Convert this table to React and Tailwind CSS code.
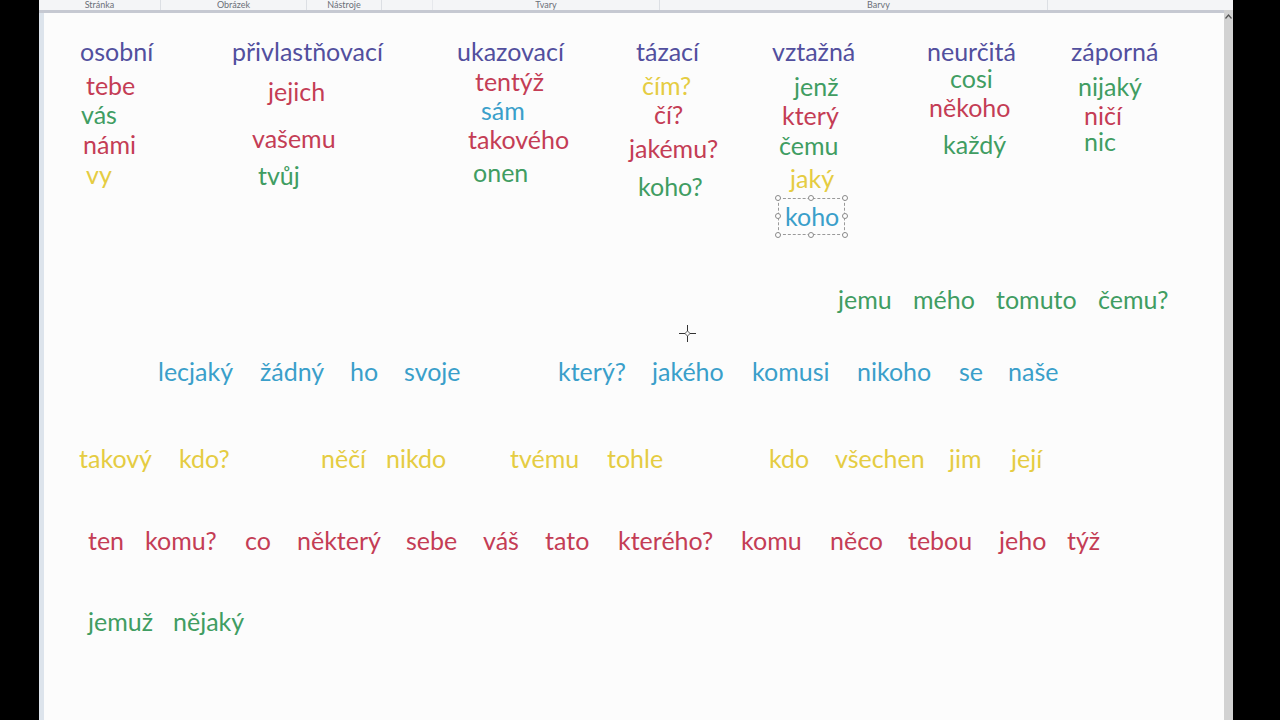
import React from 'react';

// canvas origin in page coordinates
const OX = 44;
const OY = 13;

const C = {
  head: 'text-[#524f9e]',
  red: 'text-[#c43d55]',
  green: 'text-[#409d62]',
  blue: 'text-[#3a9fca]',
  yellow: 'text-[#e5cc42]',
};

// [text, left x, center y, colour]
const words = [
  ['osobní', 80, 55, 'head'],
  ['přivlastňovací', 232, 55, 'head'],
  ['ukazovací', 457, 55, 'head'],
  ['tázací', 636, 55, 'head'],
  ['vztažná', 772, 55, 'head'],
  ['neurčitá', 927, 55, 'head'],
  ['záporná', 1071, 55, 'head'],

  ['tebe', 86, 89, 'red'],
  ['vás', 81, 118, 'green'],
  ['námi', 83, 148, 'red'],
  ['vy', 86, 178, 'yellow'],

  ['jejich', 268, 95, 'red'],
  ['vašemu', 252, 142, 'red'],
  ['tvůj', 258, 179, 'green'],

  ['tentýž', 475, 85, 'red'],
  ['sám', 481, 114, 'blue'],
  ['takového', 468, 143, 'red'],
  ['onen', 473, 176, 'green'],

  ['čím?', 642, 89, 'yellow'],
  ['čí?', 654, 118, 'red'],
  ['jakému?', 629, 152, 'red'],
  ['koho?', 638, 190, 'green'],

  ['jenž', 794, 90, 'green'],
  ['který', 782, 119, 'red'],
  ['čemu', 779, 149, 'green'],
  ['jaký', 790, 182, 'yellow'],

  ['cosi', 950, 82, 'green'],
  ['někoho', 929, 111, 'red'],
  ['každý', 943, 148, 'green'],

  ['nijaký', 1078, 90, 'green'],
  ['ničí', 1084, 119, 'red'],
  ['nic', 1084, 145, 'green'],

  ['jemu', 838, 303, 'green'],
  ['mého', 913, 303, 'green'],
  ['tomuto', 996, 303, 'green'],
  ['čemu?', 1098, 303, 'green'],

  ['lecjaký', 158, 375, 'blue'],
  ['žádný', 260, 375, 'blue'],
  ['ho', 350, 375, 'blue'],
  ['svoje', 404, 375, 'blue'],
  ['který?', 558, 375, 'blue'],
  ['jakého', 652, 375, 'blue'],
  ['komusi', 752, 375, 'blue'],
  ['nikoho', 857, 375, 'blue'],
  ['se', 959, 375, 'blue'],
  ['naše', 1008, 375, 'blue'],

  ['takový', 79, 462, 'yellow'],
  ['kdo?', 179, 462, 'yellow'],
  ['něčí', 321, 462, 'yellow'],
  ['nikdo', 386, 462, 'yellow'],
  ['tvému', 510, 462, 'yellow'],
  ['tohle', 607, 462, 'yellow'],
  ['kdo', 769, 462, 'yellow'],
  ['všechen', 835, 462, 'yellow'],
  ['jim', 949, 462, 'yellow'],
  ['její', 1011, 462, 'yellow'],

  ['ten', 88, 544, 'red'],
  ['komu?', 145, 544, 'red'],
  ['co', 245, 544, 'red'],
  ['některý', 297, 544, 'red'],
  ['sebe', 406, 544, 'red'],
  ['váš', 483, 544, 'red'],
  ['tato', 545, 544, 'red'],
  ['kterého?', 618, 544, 'red'],
  ['komu', 741, 544, 'red'],
  ['něco', 830, 544, 'red'],
  ['tebou', 908, 544, 'red'],
  ['jeho', 999, 544, 'red'],
  ['týž', 1067, 544, 'red'],

  ['jemuž', 88, 625, 'green'],
  ['nějaký', 173, 625, 'green'],
];

function Handle({ className }) {
  return <span className={`absolute w-[6px] h-[6px] rounded-full border border-[#8a8a8a] bg-white ${className}`} />;
}

function Selection() {
  // dashed text box around "koho"
  return (
    <div
      className="absolute border border-dashed border-[#9a9a9a]"
      style={{ left: 778 - OX, top: 198 - OY, width: 67, height: 37 }}
    >
      <Handle className="-left-[4px] -top-[4px]" />
      <Handle className="left-[29px] -top-[4px]" />
      <Handle className="-right-[4px] -top-[4px]" />
      <Handle className="-left-[4px] top-[14px]" />
      <Handle className="-right-[4px] top-[14px]" />
      <Handle className="-left-[4px] -bottom-[4px]" />
      <Handle className="left-[29px] -bottom-[4px]" />
      <Handle className="-right-[4px] -bottom-[4px]" />
      <span className={`absolute left-[6px] top-[7px] text-[25px] leading-5 ${C.blue}`}>koho</span>
    </div>
  );
}

function Crosshair() {
  return (
    <svg
      className="absolute"
      style={{ left: 679 - OX, top: 325 - OY }}
      width="17"
      height="17"
      viewBox="0 0 17 17"
    >
      <path d="M8.5 0v6M8.5 11v6M0 8.5h6M11 8.5h6" stroke="#333" strokeWidth="1" />
      <circle cx="8.5" cy="8.5" r="2" fill="none" stroke="#777" strokeWidth="1" />
    </svg>
  );
}

export default function App() {
  return (
    <div
      className="w-[1280px] h-[720px] bg-black flex overflow-hidden"
      style={{ fontFamily: 'Lato, "Open Sans", sans-serif' }}
    >
      <div className="w-[39px] shrink-0" />

      <div className="w-[1194px] shrink-0 flex flex-col">
        {/* ribbon group labels, mostly scrolled out of view */}
        <div className="h-[10px] shrink-0 bg-[#f4f5f7] flex text-[9px] leading-[10px] text-[#6b6f78]">
          <div className="w-[122px] text-center border-r border-[#dcdfe4]">Stránka</div>
          <div className="w-[146px] text-center border-r border-[#dcdfe4]">Obrázek</div>
          <div className="w-[75px] text-center border-r border-[#dcdfe4]">Nástroje</div>
          <div className="w-[51px] border-r border-[#e6e8ec]" />
          <div className="w-[227px] text-center border-r border-[#dcdfe4]">Tvary</div>
          <div className="w-[388px] text-center pl-[50px] border-r border-[#dcdfe4]">Barvy</div>
          <div className="flex-1" />
        </div>

        <div className="flex-1 flex">
          <div className="w-[5px] shrink-0 bg-[#dde4ec] border-t-[3px] border-[#c6c9d2]" />
          <div className="relative flex-1 bg-[#fcfcfc] border-t-[3px] border-[#c6c9d2]">
            {words.map(([t, x, y, c], i) => (
              <span
                key={i}
                className={`absolute whitespace-nowrap text-[25px] leading-5 ${C[c]}`}
                style={{ left: x - OX, top: y - OY - 3 - 11 }}
              >
                {t}
              </span>
            ))}
            <Selection />
            <Crosshair />
          </div>
          <div className="w-[9px] shrink-0 bg-[#d2d2d2] flex flex-col items-center pt-[4px]">
            <svg width="7" height="5" viewBox="0 0 7 5">
              <path d="M0.5 4.5L3.5 1L6.5 4.5" stroke="#555" strokeWidth="1.2" fill="none" />
            </svg>
          </div>
        </div>
      </div>
    </div>
  );
}
